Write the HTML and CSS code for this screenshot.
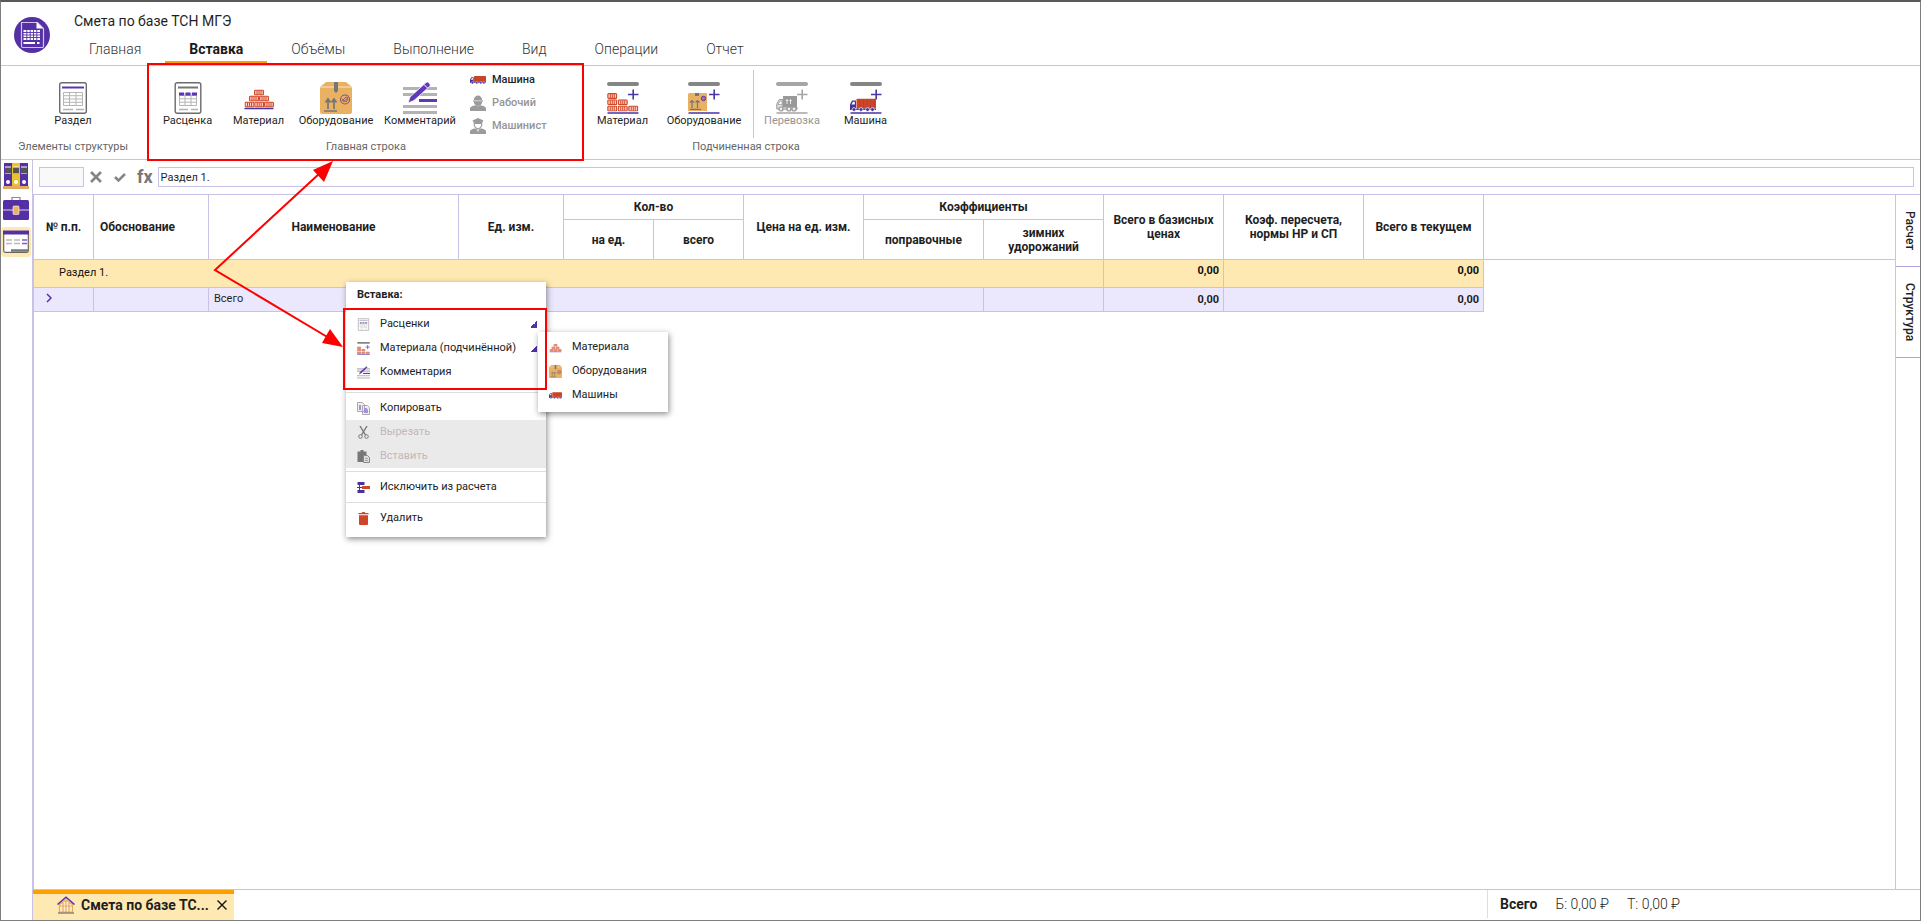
FILE: index.html
```html
<!DOCTYPE html>
<html lang="ru">
<head>
<meta charset="utf-8">
<title>Смета по базе ТСН МГЭ</title>
<link rel="stylesheet" href="styles.css">
</head>
<body>
<svg class="sprite" aria-hidden="true">
  <defs>
    <symbol id="brick" viewBox="0 0 10 6">
      <rect x=".6" y=".6" width="8.8" height="4.8" rx="1" fill="#f6d3ca" stroke="#d2492a" stroke-width="1.2"/>
      <path d="M3 1v4M5 1v4M7 1v4" stroke="#d2492a" stroke-width="1"/>
    </symbol>
    <symbol id="section" viewBox="0 0 28 32">
      <rect x=".7" y=".7" width="26.6" height="30.6" rx="2" fill="#fff" stroke="#6b6b6b" stroke-width="1.4"/>
      <path d="M3 5.5h22" stroke="#5c35b5" stroke-width="2"/>
      <path d="M4.5 10.500h19v13h-19zM4.500 13.700h19M4.500 17h19M4.500 20.300h19M10.500 10.500v13M17 10.500v13" fill="none" stroke="#b5b5b5" stroke-width="1"/>
      <path d="M4 27.500h10M17 27.500h8" stroke="#b5b5b5" stroke-width="1.300"/>
    </symbol>
    <symbol id="rate" viewBox="0 0 28 32">
      <rect x="1.200" y=".7" width="25.600" height="30.600" rx="2" fill="#fff" stroke="#6b6b6b" stroke-width="1.400"/>
      <path d="M4 5.500h20" stroke="#757575" stroke-width="2"/>
      <path d="M5.500 13.500h17v10h-17zM5.500 16.800h17M5.500 20.200h17M11 11v12.500M17 11v12.500" fill="none" stroke="#b5b5b5"/>
      <path d="M5 12h5M11.500 12h5M18 12h5" stroke="#5c35b5" stroke-width="3"/>
      <path d="M5 27.500h9M17 27.500h7" stroke="#b5b5b5" stroke-width="1.300"/>
    </symbol>
    <symbol id="bricks" viewBox="0 0 32 32">
      <use href="#brick" x="11" y="7.500" width="10" height="6"/>
      <use href="#brick" x="6" y="13.500" width="10" height="6"/><use href="#brick" x="16" y="13.500" width="10" height="6"/>
      <use href="#brick" x="1.500" y="19.500" width="10" height="6"/><use href="#brick" x="11.200" y="19.500" width="10" height="6"/><use href="#brick" x="21" y="19.500" width="10" height="6"/>
      <path d="M1.500 26.500h29" stroke="#45329a" stroke-width="1.500"/>
    </symbol>
    <symbol id="box" viewBox="0 0 32 32">
      <path d="M6 0h20l6 5v25a2 2 0 0 1-2 2H2a2 2 0 0 1-2-2V5z" fill="#e9b262"/>
      <path d="M0 5h32" stroke="#fff3de" stroke-width=".8"/>
      <path d="M14 0h4v9l-2 2-2-2z" fill="#757575"/>
      <path d="M8 27v-8M14 27v-8M5.500 20.500 8 17l2.500 3.500M11.500 20.500 14 17l2.500 3.500M4 29h13" fill="none" stroke="#757575" stroke-width="1.700"/>
      <circle cx="25" cy="17.500" r="4.500" fill="none" stroke="#885179" stroke-width="1.100"/>
      <path d="m22 19 4-4 2 1-5 4M22 17l4 3 2-3" fill="none" stroke="#885179" stroke-width=".9"/>
    </symbol>
    <symbol id="comment" viewBox="0 0 34 32">
      <path d="M0 6.500h34M0 12.500h34M0 24.500h34M0 30.500h34" stroke="#b3b3b3" stroke-width="3"/>
      <path d="M16 18.500h18" stroke="#6238ba" stroke-width="3"/>
      <path d="m5 21 2-6L22.800.800a2 2 0 0 1 3 0l.7.700a2 2 0 0 1 0 3L11 18.500z" fill="#6238ba" stroke="#fff" stroke-width=".8"/>
      <path d="m21 2.500 3.500 3.500" stroke="#fff" stroke-width="1"/>
    </symbol>
    <symbol id="truck" viewBox="0 0 26 13">
      <rect x="6.500" y="0" width="19.500" height="10" rx="1" fill="#cf4528"/>
      <path d="M10 1v8M13.500 1v8M17 1v8M20.500 1v8M24 1v8" stroke="#a93d2d" stroke-width=".6"/>
      <path d="M0 11V6l2-4h4v8h20v1.500H0z" fill="#45329a"/><path d="M1.500 6 3 3.200h1.800V6z" fill="#fff"/>
      <g fill="#45329a" stroke="#fff" stroke-width=".7"><circle cx="4" cy="11" r="1.900"/><circle cx="11" cy="11" r="1.900"/><circle cx="17.500" cy="11" r="1.900"/><circle cx="22.500" cy="11" r="1.900"/></g>
    </symbol>
    <symbol id="worker" viewBox="0 0 16 16">
      <path d="M3.800 5.500a4.200 5 0 0 1 8.400 0h.8v1h-.8a4.200 4.500 0 0 1-8.400 0H3v-1z" fill="#9b9b9b"/>
      <path d="M4 5.800h8" stroke="#fff" stroke-width=".6"/>
      <path d="M0 16v-2.500c0-2 3-2.500 5.300-3.300 1.700 1.300 3.700 1.300 5.400 0C13 11 16 11.500 16 13.500V16z" fill="#9b9b9b"/>
    </symbol>
    <symbol id="driver" viewBox="0 0 16 16">
      <path d="M2.500 2.500 8 0l5.500 2.500L12 5H4z" fill="#9b9b9b"/>
      <path d="M4.300 5v1.500a3.700 4 0 0 0 7.400 0V5" fill="#fff" stroke="#9b9b9b" stroke-width="1.200"/>
      <path d="M4.500 5.500h7" stroke="#9b9b9b"/>
      <path d="M0 16v-2.500c0-2 3-2.500 5.300-3.300L8 14l2.700-3.800C13 11 16 11.500 16 13.500V16z" fill="#9b9b9b"/>
      <path d="m6 11 2 1.500 2-1.500" stroke="#9b9b9b" fill="none"/>
    </symbol>
    <symbol id="sub-bricks" viewBox="0 0 32 32">
      <path d="M2 2h28" stroke="#858585" stroke-width="4" stroke-linecap="round"/>
      <use href="#brick" x="0" y="11" width="10.500" height="6"/>
      <use href="#brick" x="0" y="17.300" width="10.500" height="6"/><use href="#brick" x="10.500" y="17.300" width="10.500" height="6"/>
      <use href="#brick" x="0" y="23.600" width="10.500" height="6"/><use href="#brick" x="10.500" y="23.600" width="10.500" height="6"/><use href="#brick" x="21" y="23.600" width="10.500" height="6"/>
      <path d="M.5 31h31M21 12.500h10.500M26.200 7.500v10" stroke="#4a35a3" stroke-width="1.600"/>
    </symbol>
    <symbol id="sub-box" viewBox="0 0 32 32">
      <path d="M2 2h28" stroke="#858585" stroke-width="4" stroke-linecap="round"/>
      <path d="M1 11h17.500l.5 1v17H0V12z" fill="#e9b262"/>
      <path d="M7 11h4v3H7z" fill="#757575"/>
      <path d="M4 26v-7M9.500 26v-7M2 20.500l2-2 2 2M7.500 20.500l2-2 2 2M2 27.300h11" stroke="#757575" fill="none" stroke-width="1.200"/>
      <circle cx="15.500" cy="16.500" r="2.200" fill="#a77782" stroke="#5c35a5"/>
      <path d="M.5 31h31M21 12.500h10.500M26.200 7.500v10" stroke="#4a35a3" stroke-width="1.600"/>
    </symbol>
    <symbol id="sub-haul" viewBox="0 0 32 32">
      <path d="M2 2h28" stroke="#a5a5a5" stroke-width="4" stroke-linecap="round"/>
      <path d="M7 14h14v11H7z" fill="#999"/>
      <path d="M11 22v-4M14.500 22v-4M10 19l1-1.500 1 1.500M13.500 19l1-1.500 1 1.500" stroke="#fff" fill="none" stroke-width=".8"/>
      <path d="M.8 27v-5l2.500-4.500h3.500V25H21v2.500z" fill="#ddd" stroke="#999"/>
      <path d="M2 22.500 4 19h2v3.500z" fill="#fff" stroke="#999" stroke-width=".7"/>
      <g fill="#eee" stroke="#999" stroke-width="1.200"><circle cx="5" cy="27" r="2"/><circle cx="13" cy="27" r="2"/><circle cx="18" cy="27" r="2"/></g>
      <path d="M.5 31h31M21 12.500h10.500M26.200 7.500v10" stroke="#a5a5a5" stroke-width="1.600"/>
    </symbol>
    <symbol id="sub-truck" viewBox="0 0 32 32">
      <path d="M2 2h28" stroke="#858585" stroke-width="4" stroke-linecap="round"/>
      <use href="#truck" x="0" y="16.500" width="26" height="13"/>
      <path d="M.5 31h31M21 12.500h10.500M26.200 7.500v10" stroke="#4a35a3" stroke-width="1.600"/>
    </symbol>
    <symbol id="copy" viewBox="0 0 13 13">
      <path d="M.5.500h5l2 2v7h-7zM5.500 3.500h5l2 2v7h-7z" fill="#eee" stroke="#aaa"/>
      <path d="M2 3h2v5H2zM7 6h2.500l1.500 2v3H7z" fill="#a78fe0"/>
    </symbol>
    <symbol id="cut" viewBox="0 0 13 13">
      <path d="m3 0 5.500 9M10 0 4.500 9" stroke="#777" stroke-width="1.400"/>
      <circle cx="3.500" cy="10.500" r="1.800" fill="none" stroke="#777"/><circle cx="9.500" cy="10.500" r="1.800" fill="none" stroke="#777"/>
    </symbol>
    <symbol id="paste" viewBox="0 0 13 13">
      <path d="M.5 1.500h3V0h3v1.500h3V12h-9z" fill="#777"/>
      <path d="M6.500 5.500h4l2 2v5h-6z" fill="#ddd" stroke="#888"/><path d="M8 8.500h3M8 10.500h3" stroke="#999" stroke-width=".8"/>
    </symbol>
    <symbol id="exclude" viewBox="0 0 13 13">
      <path d="M.5 1h7v3h-7zM.5 9h7v3h-7zM2 4h1v2h2v1H3v2H2V7H0V6h2z" fill="#45329a"/>
      <path d="M5 5h8v3H5z" fill="#cf4528"/>
    </symbol>
    <symbol id="trash" viewBox="0 0 13 13">
      <path d="M1.500 1h3l1-1h2l1 1h3v1.300h-10zM2 3.200h9V12a1 1 0 0 1-1 1H3a1 1 0 0 1-1-1z" fill="#cf4528"/>
    </symbol>
  </defs>
</svg>

<header class="header">
  <svg class="logo" viewBox="0 0 36 36" aria-hidden="true">
    <circle cx="18" cy="18" r="18" fill="#5530a5"/>
    <path d="M7.500 5.500h16l6 6V29a1.500 1.500 0 0 1-1.500 1.500H9A1.500 1.500 0 0 1 7.500 29z" fill="none" stroke="#cfc3ee" stroke-width="1.200"/>
    <path d="M22.500 5v6.500H29z" fill="#fff"/>
    <path d="M9.500 13H26v10H9.500z" fill="#fff"/>
    <path d="M9 15.500h17.500M9 18h17.500M9 20.500h17.500M12.800 13v10M16.200 13v10M19.500 13v10M22.800 13v10" stroke="#5530a5" stroke-width=".9"/>
    <path d="M9.500 26H21M23 26h2.500" stroke="#fff" stroke-width="1.800"/>
  </svg>
  <div class="header-main">
    <h1 class="title">Смета по базе ТСН МГЭ</h1>
    <nav class="tabs">
      <a class="tab" href="#">Главная</a>
      <a class="tab tab-active" href="#">Вставка</a>
      <a class="tab" href="#">Объёмы</a>
      <a class="tab" href="#">Выполнение</a>
      <a class="tab" href="#">Вид</a>
      <a class="tab" href="#">Операции</a>
      <a class="tab" href="#">Отчет</a>
    </nav>
  </div>
</header>

<section class="ribbon">
  <div class="group group-structure">
    <div class="tools">
      <button class="tool"><svg class="icon-doc"><use href="#section"/></svg>Раздел</button>
    </div>
    <div class="group-name">Элементы структуры</div>
  </div>
  <div class="group group-main">
    <div class="tools">
      <button class="tool"><svg class="icon-doc"><use href="#rate"/></svg>Расценка</button>
      <button class="tool"><svg class="icon-big"><use href="#bricks"/></svg>Материал</button>
      <button class="tool tool-wide"><svg class="icon-big"><use href="#box"/></svg>Оборудование</button>
      <button class="tool tool-wide"><svg class="icon-wide"><use href="#comment"/></svg>Комментарий</button>
      <div class="tool-list">
        <button class="tool-row"><svg class="icon-row"><use href="#truck"/></svg>Машина</button>
        <button class="tool-row" disabled><svg class="icon-row"><use href="#worker"/></svg>Рабочий</button>
        <button class="tool-row" disabled><svg class="icon-row"><use href="#driver"/></svg>Машинист</button>
      </div>
    </div>
    <div class="group-name">Главная строка</div>
  </div>
  <div class="group group-sub">
    <div class="tools">
      <button class="tool"><svg class="icon-big"><use href="#sub-bricks"/></svg>Материал</button>
      <button class="tool tool-widest"><svg class="icon-big"><use href="#sub-box"/></svg>Оборудование</button>
      <div class="tool-separator"></div>
      <button class="tool tool-medium" disabled><svg class="icon-big"><use href="#sub-haul"/></svg>Перевозка</button>
      <button class="tool"><svg class="icon-big"><use href="#sub-truck"/></svg>Машина</button>
    </div>
    <div class="group-name">Подчиненная строка</div>
  </div>
</section>

<div class="workspace">
  <aside class="sidebar">
    <button class="side-button" aria-label="Документы">
      <svg viewBox="0 0 26 26"><path d="M1 0h8v23H1zM17 0h8v23h-8z" fill="#5530a5"/><path d="M9 0h8v23H9z" fill="#eac42f"/><path d="M2 4h6v6H2zM10 4h6v6h-6zM18 4h6v6h-6z" fill="#555"/><path d="M2 4h6M10 4h6M18 4h6" stroke="#fff"/><path d="M2 10.500h6M10 10.500h6M18 10.500h6" stroke="#aaa"/><g fill="#fff"><circle cx="5" cy="19" r="2"/><circle cx="13" cy="19" r="2"/><circle cx="21" cy="19" r="2"/></g><path d="M0 24.500h26" stroke="#e5a961" stroke-width="3"/></svg>
    </button>
    <button class="side-button" aria-label="Портфель">
      <svg viewBox="0 0 26 26"><path d="M9 4V1.500h8V4" fill="none" stroke="#888" stroke-width="1.200"/><rect y="4" width="26" height="20" rx="1.500" fill="#5530a5"/><path d="M0 14h26" stroke="#fff" stroke-width=".8"/><rect x="10" y="10" width="6" height="8.500" rx="1" fill="#e9b262" stroke="#fff" stroke-width=".6"/></svg>
    </button>
    <button class="side-button side-button-active" aria-label="Смета">
      <svg viewBox="0 0 26 26"><rect x=".7" y="2.700" width="24.600" height="20.600" rx="1.500" fill="#fff" stroke="#666" stroke-width="1.200"/><path d="M0 1.500h26v4H0z" fill="#5530a5"/><path d="M3 11h6M11 11h6M3 14.500h6M11 14.500h6" stroke="#bbb" stroke-width="1.500"/><path d="M19 11h5M19 14.500h5" stroke="#7c5cc9" stroke-width="1.500"/><path d="M8 21.500h17" stroke="#777" stroke-width="2.500"/></svg>
    </button>
  </aside>

  <div class="main">
    <div class="formula-bar">
      <input class="cell-name" type="text" aria-label="Ячейка">
      <button class="formula-button" aria-label="Отмена"><svg viewBox="0 0 12 12"><path d="m1 1 10 10M11 1 1 11" stroke="#868686" stroke-width="2.700"/></svg></button>
      <button class="formula-button" aria-label="Принять"><svg viewBox="0 0 12 12"><path d="m1 6 3.500 3.500L11 3" stroke="#868686" stroke-width="2.500" fill="none"/></svg></button>
      <label class="fx" for="formula">fx</label>
      <input class="formula" id="formula" type="text" value="Раздел 1.">
    </div>

    <div class="sheet-row">
      <div class="sheet">
        <table class="estimate">
          <colgroup><col class="w60"><col class="w115"><col class="w250"><col class="w105"><col class="w90"><col class="w90"><col class="w120"><col class="w120"><col class="w120"><col class="w120"><col class="w140"><col class="w120"><col></colgroup>
          <thead>
            <tr class="head-top">
              <th rowspan="2">№ п.п.</th><th rowspan="2" class="left">Обоснование</th><th rowspan="2">Наименование</th><th rowspan="2">Ед. изм.</th>
              <th colspan="2">Кол-во</th><th rowspan="2">Цена на ед. изм.</th><th colspan="2">Коэффициенты</th>
              <th rowspan="2">Всего в базисных ценах</th><th rowspan="2">Коэф. пересчета, нормы НР и СП</th><th rowspan="2">Всего в текущем</th><td rowspan="2" class="rest"></td>
            </tr>
            <tr class="head-bottom"><th>на ед.</th><th>всего</th><th>поправочные</th><th>зимних удорожаний</th></tr>
          </thead>
          <tbody>
            <tr class="section-row"><td colspan="9" class="section-name">Раздел 1.</td><td class="sum">0,00</td><td colspan="2" class="sum">0,00</td><td class="blank"></td></tr>
            <tr class="total-row">
              <td class="expand"><button aria-label="Развернуть"><svg viewBox="0 0 6 10"><path d="m1 1 4 4-4 4" fill="none" stroke="#5530a5" stroke-width="1.500"/></svg></button></td>
              <td></td><td colspan="6" class="total-name">Всего</td><td></td><td class="sum">0,00</td><td colspan="2" class="sum">0,00</td><td class="blank"></td>
            </tr>
          </tbody>
        </table>
      </div>
      <div class="rail">
        <button class="rail-tab">Расчет</button>
        <button class="rail-tab rail-tab-tall">Структура</button>
      </div>
    </div>

    <footer class="status">
      <div class="doc-tab">
        <svg class="house" viewBox="0 0 18 18" aria-hidden="true"><path d="M2.500 8.500 9 4l6.500 4.500V16h-13zM6 7v9M9 5v11M12 7v9M3 10h12" fill="#fff0ca" stroke="#e5a961" stroke-width="1.200"/><path d="M.5 8.500 9 1.300l8.500 7.200" fill="none" stroke="#5530a5" stroke-width="1.500"/><path d="M1 17h16" stroke="#777" stroke-width="1.300"/></svg>
        <span class="doc-name">Смета по базе ТС...</span>
        <button class="doc-close" aria-label="Закрыть"><svg viewBox="0 0 10 10"><path d="m.5.500 9 9M9.500.500l-9 9" stroke="#111" stroke-width="1.400"/></svg></button>
      </div>
      <div class="totals"><strong>Всего</strong><span>Б: 0,00 ₽</span><span>Т: 0,00 ₽</span></div>
    </footer>
  </div>
</div>

<div class="menu context-menu">
  <div class="menu-title">Вставка:</div>
  <button class="menu-item has-submenu"><svg class="faded"><use href="#rate"/></svg>Расценки</button>
  <button class="menu-item has-submenu"><svg><use href="#sub-bricks"/></svg>Материала (подчинённой)</button>
  <button class="menu-item menu-item-last"><svg><use href="#comment"/></svg>Комментария</button>
  <hr>
  <button class="menu-item"><svg><use href="#copy"/></svg>Копировать</button>
  <button class="menu-item" disabled><svg><use href="#cut"/></svg>Вырезать</button>
  <button class="menu-item" disabled><svg><use href="#paste"/></svg>Вставить</button>
  <hr>
  <button class="menu-item"><svg><use href="#exclude"/></svg>Исключить из расчета</button>
  <hr>
  <button class="menu-item"><svg><use href="#trash"/></svg>Удалить</button>
</div>
<div class="menu submenu">
  <button class="menu-item"><svg><use href="#bricks"/></svg>Материала</button>
  <button class="menu-item"><svg><use href="#box"/></svg>Оборудования</button>
  <button class="menu-item"><svg><use href="#truck"/></svg>Машины</button>
</div>

<svg class="callouts" aria-hidden="true">
  <g fill="none" stroke="#fe0000" stroke-width="2">
    <rect x="148" y="64" width="435" height="96"/>
    <rect x="344" y="309" width="202" height="80"/>
    <path d="M320 173 215 270l114 68"/>
  </g>
  <path d="m333 161-20 9 11 12zM343 347l-21-4 8-14z" fill="#fe0000"/>
</svg>
</body>
</html>
```
FILE: styles.css
```css
* { box-sizing: border-box; }

body {
  margin: 0;
  height: 100vh;
  display: flex;
  flex-direction: column;
  overflow: hidden;
  border: 1px solid #7f7f7f;
  border-top: 2px solid #5a5858;
  background: #fff;
  color: #1f1f1f;
  font: 11px/14px Roboto, "Noto Sans", sans-serif;
}

button, input {
  font: inherit;
  color: inherit;
}

button {
  padding: 0;
  border: 0;
  background: none;
}

svg { display: block; flex: none; }

.sprite { position: absolute; width: 0; height: 0; }

/* Header */
.header {
  display: flex;
  height: 64px;
  border-bottom: 1px solid #cac1e6;
}

.logo {
  width: 36px;
  height: 36px;
  margin: 15px 13px 0;
}

.header-main {
  display: flex;
  flex-direction: column;
  justify-content: space-between;
  padding: 0 0 1px 2px;
}

.title {
  margin: 9px 9px 0;
  font-size: 14px;
  font-weight: 400;
  line-height: 20px;
}

.tabs { display: flex; }

.tab {
  height: 26px;
  padding: 0 24px;
  border-bottom: 3px solid transparent;
  color: #333;
  font-size: 14px;
  font-weight: 300;
  line-height: 22px;
  text-decoration: none;
}

.tab-active {
  border-color: #fe9e00;
  color: #1a1a1a;
  font-weight: 700;
}

/* Ribbon */
.ribbon {
  display: flex;
  gap: 7px;
  height: 94px;
  border-bottom: 1px solid #cac1e6;
}

.group {
  display: flex;
  flex-direction: column;
  justify-content: space-between;
  padding-bottom: 5px;
}

.group-structure { width: 144px; }
.group-structure .tools { justify-content: center; }
.group-main { width: 428px; }
.group-sub { width: 318px; }

.tools {
  display: flex;
  height: 72px;
}

.tool {
  display: flex;
  flex-direction: column;
  align-items: center;
  width: 71px;
  padding-top: 16px;
}

.tool-medium { width: 76px; }
.tool-wide { width: 84px; }
.tool-widest { width: 92px; }

.tool:disabled, .tool-row:disabled { color: #949494; }

.icon-doc { width: 28px; height: 32px; }
.icon-big { width: 32px; height: 32px; }
.icon-wide { width: 34px; height: 32px; }
.icon-row { width: 16px; height: 16px; }

.tool-list {
  display: flex;
  flex-direction: column;
  gap: 7px;
  padding: 6px 0 0 8px;
}

.tool-row {
  display: flex;
  align-items: center;
  gap: 6px;
  font-weight: 500;
}

.tool-separator {
  width: 1px;
  height: 68px;
  margin: 4px 0 0 3px;
  background: #cac1e6;
}

.group-name {
  color: #666;
  text-align: center;
}

/* Workspace */
.workspace {
  display: flex;
  flex: 1;
  min-height: 0;
}

.sidebar {
  display: flex;
  flex-direction: column;
  gap: 3px;
  width: 32px;
  padding-top: 1px;
  border-right: 1px solid #cac1e6;
}

.side-button {
  display: grid;
  place-items: center;
  height: 30px;
  margin-right: 1px;
}

.side-button svg { width: 26px; height: 26px; }

.side-button-active {
  border-radius: 4px;
  background: #ffe9b2;
}

.main {
  display: flex;
  flex: 1;
  flex-direction: column;
  min-width: 0;
}

.formula-bar {
  display: flex;
  align-items: center;
  gap: 12px;
  height: 35px;
  padding: 0 6px;
  border-bottom: 1px solid #cac1e6;
}

.cell-name, .formula {
  height: 20px;
  border: 1px solid #cac1e6;
  padding: 0 2px;
}

.cell-name {
  width: 45px;
  margin-right: -6px;
  background: #f9f9f9;
}

.formula {
  flex: 1;
  margin-left: -6px;
}

.formula-button, .formula-button svg {
  width: 12px;
  height: 12px;
}

.fx {
  margin: 0 -1px;
  color: #777;
  font-size: 18px;
  font-weight: 700;
}

.sheet-row {
  display: flex;
  flex: 1;
  min-height: 0;
  border-bottom: 1px solid #cac1e6;
}

.sheet {
  flex: 1;
  min-width: 0;
  border-left: 1px solid #cac1e6;
}

.estimate {
  width: 100%;
  table-layout: fixed;
  border-collapse: separate;
  border-spacing: 0;
}

.w60 { width: 60px; }
.w90 { width: 90px; }
.w105 { width: 105px; }
.w115 { width: 115px; }
.w120 { width: 120px; }
.w140 { width: 140px; }
.w250 { width: 250px; }

.estimate th, .estimate td {
  padding: 0 5px;
  border-right: 1px solid #cac1e6;
  border-bottom: 1px solid #cac1e6;
}

.estimate th { font-size: 12px; font-weight: 700; }
.estimate .left { text-align: left; padding-left: 6px; }
.estimate .rest { border-right: 0; }
.estimate .blank { border: 0; background: #fff; }

.head-top { height: 25px; }
.head-bottom { height: 40px; }

.section-row { height: 28px; background: #ffe9b2; color: #111; }
.total-row { height: 24px; background: #ebe8fe; }
.estimate .section-name { padding: 0 5px 2px 25px; }
.estimate .sum { font-weight: 700; text-align: right; padding-right: 4px; }
.section-row .sum { padding-bottom: 6px; }
.estimate .total-name { padding-bottom: 2px; }
.estimate .expand { padding-left: 12px; }
.expand svg { width: 6px; height: 10px; }

.rail {
  width: 25px;
  border-left: 1px solid #cac1e6;
}

.rail-tab {
  display: block;
  width: 100%;
  height: 72px;
  padding-left: 3px;
  border-bottom: 1px solid #b4a2dc;
  font-size: 12px;
  font-weight: 500;
  writing-mode: vertical-rl;
}

.rail-tab-tall { height: 91px; }

/* Bottom strip */
.status {
  display: flex;
  justify-content: space-between;
  height: 30px;
}

.doc-tab {
  display: flex;
  align-items: center;
  min-width: 200px;
  padding: 0 7px 4px 24px;
  border-top: 4px solid #fe9e00;
  background: #ffe9b2;
}

.house { width: 18px; height: 18px; }

.doc-name {
  flex: 1;
  margin: 0 8px 0 6px;
  font-size: 14px;
  font-weight: 700;
  line-height: 18px;
  white-space: nowrap;
}

.doc-close svg { width: 10px; height: 10px; }

.totals {
  display: flex;
  align-items: center;
  gap: 18px;
  width: 433px;
  height: 28px;
  padding-left: 12px;
  border-left: 1px solid #ddd;
  font-size: 14px;
  font-weight: 300;
}

.totals strong { font-weight: 700; }

/* Menus */
.menu {
  position: absolute;
  display: flex;
  flex-direction: column;
  background: #fff;
  box-shadow: 1px 2px 6px rgba(0, 0, 0, .45);
  color: #222;
}

.context-menu {
  left: 346px;
  top: 282px;
  width: 200px;
  padding-bottom: 7px;
}

.submenu {
  left: 538px;
  top: 332px;
  width: 130px;
  padding: 3px 0 5px;
}

.menu-title {
  padding: 6px 11px 10px;
  font-weight: 700;
}

.menu-item {
  display: flex;
  align-items: center;
  gap: 10px;
  height: 24px;
  padding: 0 9px 0 11px;
  white-space: nowrap;
}

.menu-item svg { width: 13px; height: 13px; }
.menu-item .faded { opacity: .75; }
.menu-item-last { margin-bottom: 5px; }

.menu-item:disabled {
  background: #eaeaea;
  color: #c6b6b8;
}

.has-submenu::after {
  content: "";
  width: 7px;
  height: 7px;
  margin-left: auto;
  background: linear-gradient(135deg, transparent 50%, #5233a8 50%);
}

.menu hr {
  width: 100%;
  margin: 3px 0;
  border: 0;
  border-top: 1px solid #ddd;
}

/* Callouts */
.callouts {
  position: absolute;
  inset: 0;
  width: 100%;
  height: 100%;
  pointer-events: none;
}
```
